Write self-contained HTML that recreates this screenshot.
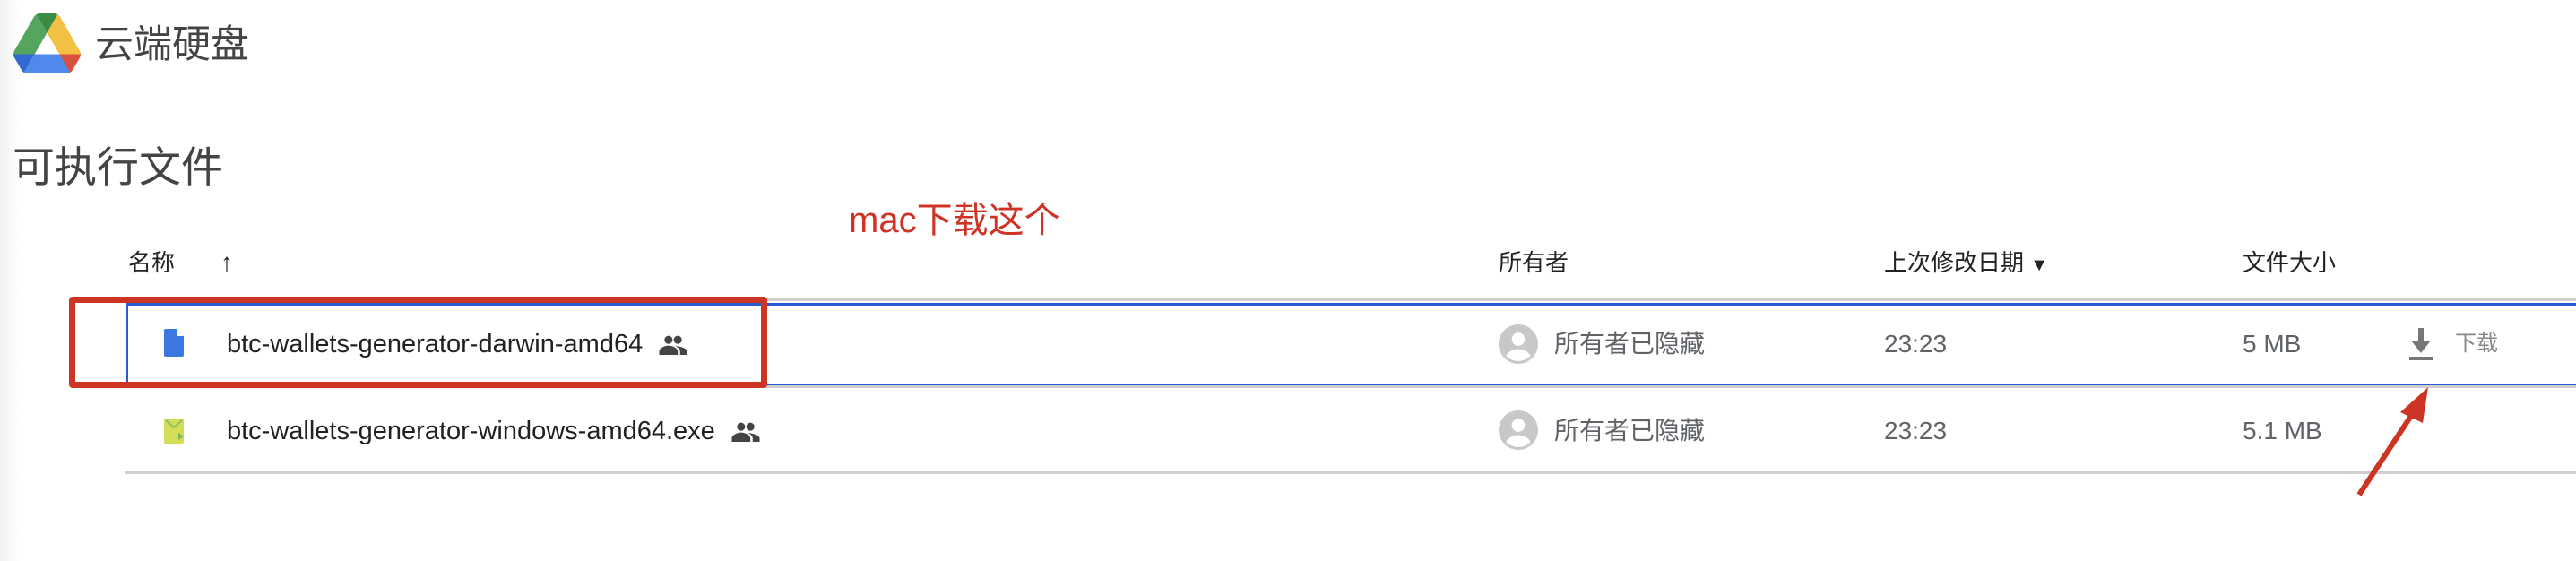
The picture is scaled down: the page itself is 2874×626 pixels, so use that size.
<!DOCTYPE html>
<html><head><meta charset="utf-8">
<style>
html,body{margin:0;padding:0;width:2874px;height:626px;overflow:hidden;background:#fff;position:relative;font-family:"Liberation Sans","Noto Sans CJK SC",sans-serif;}
.a{position:absolute;white-space:nowrap;line-height:1;}
.hd{font-size:26px;color:#222;}
.rw{font-size:29px;color:#202124;display:flex;align-items:center;}
.rw svg{margin-left:18px;}
.gr{font-size:28px;color:#5f6368;}
.line{position:absolute;height:3px;background:#cfcfcf;}
</style></head><body>
<div style="position:absolute;left:0;top:0;width:22px;height:626px;background:linear-gradient(to right,#f1f1f1,#fff);"></div>

<svg class="a" style="left:15px;top:15px" width="75" height="67" viewBox="0 0 87.3 78">
<path d="m6.6 66.85 3.85 6.65c.8 1.4 1.95 2.5 3.3 3.3l13.75-23.8h-27.5c0 1.55.4 3.1 1.2 4.5z" fill="#3468d1"/>
<path d="m43.65 25-13.75-23.8c-1.35.8-2.5 1.9-3.3 3.3l-25.4 44a9.06 9.06 0 0 0 -1.2 4.5h27.5z" fill="#56a55e"/>
<path d="m73.55 76.8c1.35-.8 2.5-1.9 3.3-3.3l1.6-2.75 7.65-13.250c.8-1.4 1.2-2.95 1.2-4.5h-27.502l5.852 11.5z" fill="#d9503f"/>
<path d="m43.65 25 13.75-23.8c-1.35-.8-2.9-1.2-4.5-1.2h-18.5c-1.6 0-3.15.45-4.5 1.2z" fill="#3b8a46"/>
<path d="m59.8 53h-32.3l-13.75 23.8c1.35.8 2.9 1.2 4.5 1.2h50.8c1.6 0 3.15-.45 4.5-1.2z" fill="#5089ec"/>
<path d="m73.4 26.5-12.7-22c-.8-1.4-1.95-2.5-3.3-3.3l-13.75 23.8 16.15 28h27.45c0-1.55-.4-3.1-1.2-4.5z" fill="#f2c144"/>
</svg>
<div class="a" style="left:106px;top:29px;font-size:43px;color:#444;">云端硬盘</div>
<div class="a" style="left:14px;top:163px;font-size:47px;color:#444;">可执行文件</div>
<div class="a" style="left:947px;top:226px;font-size:40px;color:#d03225;">mac下载这个</div>

<div class="a hd" style="left:143px;top:280px;">名称</div>
<div class="a hd" style="left:246px;top:279px;font-size:28px;">↑</div>
<div class="a hd" style="left:1672px;top:280px;">所有者</div>
<div class="a hd" style="left:2102px;top:280px;">上次修改日期 <span style="font-size:20px">▼</span></div>
<div class="a hd" style="left:2502px;top:280px;">文件大小</div>

<div class="line" style="left:139px;top:333px;width:2735px;"></div>
<div style="position:absolute;left:141px;top:338px;width:2733px;height:88px;border-top:3px solid #2b5bd0;border-bottom:3px solid #2b5bd0;border-left:2px solid #2b5bd0;"></div>
<div class="line" style="left:139px;top:430px;width:2735px;"></div>

<svg class="a" style="left:183px;top:367px" width="22" height="31" viewBox="0 0 22 31"><path d="M2 0h12l8 8v21a2 2 0 0 1-2 2H2a2 2 0 0 1-2-2V2a2 2 0 0 1 2-2z" fill="#3c78e0"/><path d="M14 0v8h8z" fill="#fff"/></svg>
<div class="a rw" style="left:253px;top:370px;">btc-wallets-generator-darwin-amd64<svg width="32" height="22" viewBox="0 0 24 17"><circle cx="8" cy="4" r="3.5" fill="#444"/><circle cx="16" cy="4" r="3.5" fill="#444"/><path d="M0 17v-3c0-3 5-5 8-5s8 2 8 5v3z" fill="#444"/><path d="M14 9.5c3 0 10 1.5 10 4.5v3h-6v-3c0-2-2-3.5-4-4.5z" fill="#444"/></svg></div>

<svg class="a" style="left:1672px;top:362px" width="44" height="44" viewBox="0 0 24 24"><circle cx="12" cy="12" r="12" fill="#c8c8c8"/><circle cx="12" cy="9" r="4" fill="#fff"/><path d="M4.5 19c2-3 5-4 7.5-4s5.5 1 7.5 4a10 10 0 0 1-15 0z" fill="#fff"/></svg>
<div class="a gr" style="left:1734px;top:370px;">所有者已隐藏</div>
<div class="a gr" style="left:2102px;top:370px;">23:23</div>
<div class="a gr" style="left:2502px;top:370px;">5 MB</div>
<svg class="a" style="left:2686px;top:366px" width="30" height="36" viewBox="0 0 30 36"><rect x="12" y="0" width="6" height="16" fill="#777"/><path d="M4 14h22L15 28z" fill="#777"/><rect x="2" y="32" width="26" height="4" fill="#777"/></svg>
<div class="a" style="left:2739px;top:372px;font-size:24px;color:#888;">下载</div>

<svg class="a" style="left:183px;top:467px" width="22" height="28" viewBox="0 0 22 28"><rect width="22" height="28" rx="2" fill="#d3dd55"/><path d="M2 2l9 8 9-8" stroke="#8cc060" stroke-width="2" fill="none"/><path d="M16 16l6 4-6 4z" fill="#7ab85a"/></svg>
<div class="a rw" style="left:253px;top:467px;">btc-wallets-generator-windows-amd64.exe<svg width="32" height="22" viewBox="0 0 24 17"><circle cx="8" cy="4" r="3.5" fill="#444"/><circle cx="16" cy="4" r="3.5" fill="#444"/><path d="M0 17v-3c0-3 5-5 8-5s8 2 8 5v3z" fill="#444"/><path d="M14 9.5c3 0 10 1.5 10 4.5v3h-6v-3c0-2-2-3.5-4-4.5z" fill="#444"/></svg></div>
<svg class="a" style="left:1672px;top:458px" width="44" height="44" viewBox="0 0 24 24"><circle cx="12" cy="12" r="12" fill="#c8c8c8"/><circle cx="12" cy="9" r="4" fill="#fff"/><path d="M4.5 19c2-3 5-4 7.5-4s5.5 1 7.5 4a10 10 0 0 1-15 0z" fill="#fff"/></svg>
<div class="a gr" style="left:1734px;top:467px;">所有者已隐藏</div>
<div class="a gr" style="left:2102px;top:467px;">23:23</div>
<div class="a gr" style="left:2502px;top:467px;">5.1 MB</div>
<div class="line" style="left:139px;top:526px;width:2735px;"></div>

<div style="position:absolute;left:77px;top:331px;width:765px;height:88px;border:7px solid #cc3424;border-radius:4px;"></div>
<svg class="a" style="left:2600px;top:420px" width="140" height="150" viewBox="0 0 140 150">
<line x1="32" y1="132" x2="96" y2="35" stroke="#cc3424" stroke-width="6"/>
<path d="M109 12 L78 40 L103 52 Z" fill="#cc3424"/>
</svg>
</body></html>
